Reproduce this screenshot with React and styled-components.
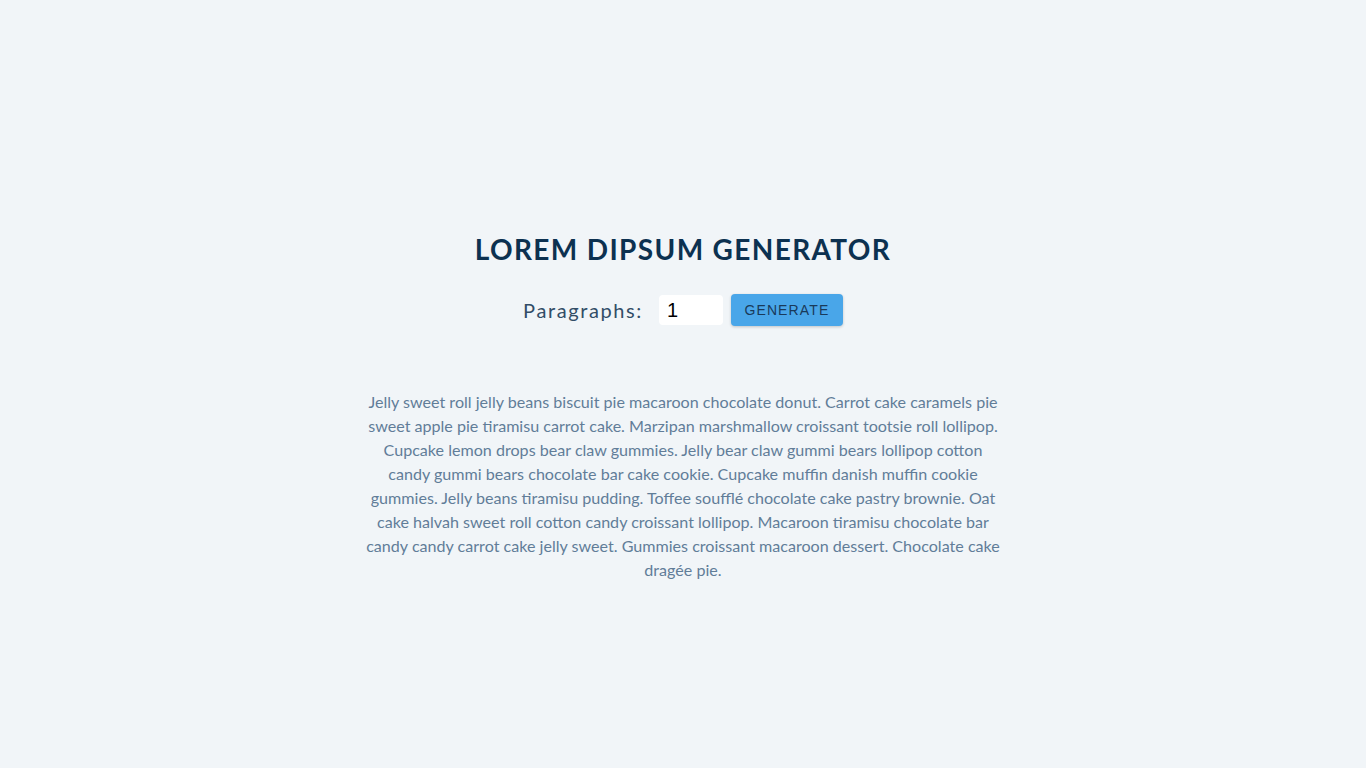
import React, { useState } from "react";
import styled, { createGlobalStyle } from "styled-components";

const GlobalStyle = createGlobalStyle`
  *, *::before, *::after {
    box-sizing: border-box;
  }
  body {
    margin: 0;
    background: #f1f5f8;
    font-family: "Lato", "Open Sans", sans-serif;
    color: #102a42;
    line-height: 1.5;
  }
`;

const Section = styled.section`
  width: 90vw;
  max-width: 40rem;
  margin: 0 auto;
  padding-top: 232px;
  text-align: center;
`;

const Title = styled.h3`
  margin: 0 0 27px;
  font-size: 1.75rem;
  font-weight: 700;
  line-height: 1.25;
  letter-spacing: 0.085rem;
  text-transform: uppercase;
  color: #0c3150;
`;

const Form = styled.form`
  display: flex;
  justify-content: center;
  align-items: center;
  margin-bottom: 64px;
`;

const Label = styled.label`
  font-size: 1.25rem;
  letter-spacing: 0.1rem;
  color: #324d67;
  margin-right: 8px;
`;

const NumberInput = styled.input`
  width: 4rem;
  height: 30px;
  padding: 0.25rem 0.5rem;
  margin: 0 0.5rem;
  border: none;
  border-radius: 0.25rem;
  background: #fff;
  font-family: "Liberation Sans", Arial, sans-serif;
  font-size: 1.25rem;
  color: #000;
  outline: none;
`;

const Button = styled.button`
  width: 112px;
  height: 32px;
  padding: 0.375rem 0.5rem;
  border: transparent;
  border-radius: 0.25rem;
  background: #49a6e9;
  color: #1a3a5a;
  font-family: "Liberation Sans", Arial, sans-serif;
  font-size: 0.875rem;
  letter-spacing: 0.07rem;
  text-transform: uppercase;
  box-shadow: 0 1px 3px rgba(0, 0, 0, 0.2);
  cursor: pointer;
`;

const Article = styled.article`
  color: #617d98;
`;

const Text = styled.p`
  margin: 0 0 1.25rem;
  font-size: 16.1px;
  line-height: 24px;
`;

const text =
  "Jelly sweet roll jelly beans biscuit pie macaroon chocolate donut. Carrot cake caramels pie sweet apple pie tiramisu carrot cake. Marzipan marshmallow croissant tootsie roll lollipop. Cupcake lemon drops bear claw gummies. Jelly bear claw gummi bears lollipop cotton candy gummi bears chocolate bar cake cookie. Cupcake muffin danish muffin cookie gummies. Jelly beans tiramisu pudding. Toffee soufflé chocolate cake pastry brownie. Oat cake halvah sweet roll cotton candy croissant lollipop. Macaroon tiramisu chocolate bar candy candy carrot cake jelly sweet. Gummies croissant macaroon dessert. Chocolate cake dragée pie.";

export default function App() {
  const [count, setCount] = useState(1);
  return (
    <>
      <GlobalStyle />
      <Section>
        <Title>lorem dipsum generator</Title>
        <Form onSubmit={(e) => e.preventDefault()}>
          <Label htmlFor="amount">Paragraphs:</Label>
          <NumberInput
            type="text"
            id="amount"
            value={count}
            onChange={(e) => setCount(e.target.value)}
          />
          <Button type="submit">generate</Button>
        </Form>
        <Article>
          <Text>{text}</Text>
        </Article>
      </Section>
    </>
  );
}
